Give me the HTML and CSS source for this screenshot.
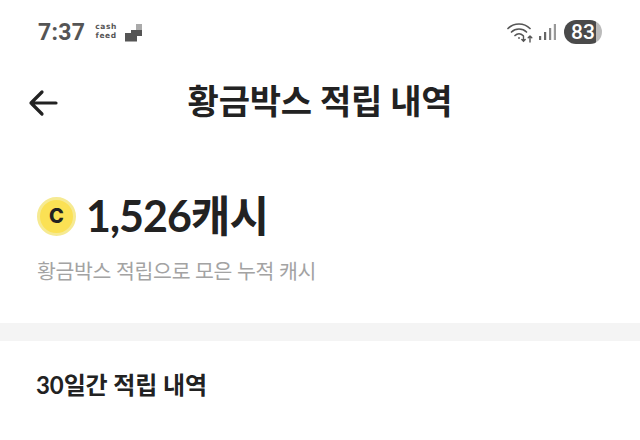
FILE: index.html
```html
<!DOCTYPE html>
<html lang="ko">
<head>
<meta charset="utf-8">
<title>황금박스 적립 내역</title>
<link rel="stylesheet" href="styles.css">
</head>
<body>
<div class="page">
  <div class="status">
    <div class="status-left">
      <span class="time">7:37</span>
      <span class="brand"><span class="brand-line">cash</span><span class="brand-line">feed</span></span>
      <svg class="steps" width="18" height="18" viewBox="0 0 18 18"><rect x="11" y="0" width="6" height="6" fill="#aaa"/><rect x="6" y="6" width="11" height="6" fill="#555"/><rect x="0" y="12" width="12" height="5.500" fill="#555"/><rect x="0" y="9" width="6" height="3" fill="#555"/></svg>
    </div>
    <div class="status-right">
      <svg class="wifi" width="28" height="22" viewBox="0 0 28 22" fill="none" stroke="#555" stroke-width="1.7" stroke-linecap="round"><path d="M1 7.500C7 1.500 17 1.500 23 7.500"/><path d="M4.500 11C8.500 7 15.500 7 19.500 11"/><path d="M8 14.500c2.300-2.200 5.700-2.200 8 0"/><circle cx="12" cy="17" r=".9" fill="#555" stroke="none"/><path d="M16.500 15v5M14.800 18.500l1.700 1.700 1.700-1.700M23 21v-6M21.200 16.800l1.800-1.800 1.800 1.800" stroke-width="1.400"/></svg>
      <svg class="signal" width="17" height="18" viewBox="0 0 17 18"><rect x="0" y="13" width="2.200" height="4" fill="#666"/><rect x="5" y="9" width="2.200" height="8" fill="#666"/><rect x="10" y="5" width="2.200" height="12" fill="#888"/><rect x="14.800" y="1" width="2.200" height="16" fill="#999"/></svg>
      <span class="battery">83</span>
    </div>
  </div>
  <header class="appbar">
    <svg class="back" width="32" height="30" viewBox="0 0 32 30" fill="none" stroke="#222" stroke-width="3.200" stroke-linecap="round" stroke-linejoin="round"><path d="M29 15H4M15 4 4 15l11 11"/></svg>
    <h1 class="title">황금박스 적립 내역</h1>
  </header>
  <section class="summary">
    <div class="amount-row">
      <span class="coin">C</span>
      <span class="amount">1,526캐시</span>
    </div>
    <p class="caption">황금박스 적립으로 모은 누적 캐시</p>
  </section>
  <div class="divider"></div>
  <h2 class="section-title">30일간 적립 내역</h2>
</div>
</body>
</html>
```
FILE: styles.css
```css
* { box-sizing: border-box; }
html, body { margin: 0; padding: 0; background: #fff; }
.page {
  width: 640px;
  height: 440px;
  overflow: hidden;
  font-family: Lato, "Noto Sans CJK KR", sans-serif;
  color: #222;
}
.status {
  height: 64px;
  padding: 0 38px;
  display: flex;
  justify-content: space-between;
  align-items: center;
}
.status-left, .status-right { display: flex; align-items: center; }
.time {
  font-family: Roboto, sans-serif;
  font-size: 23px;
  font-weight: 700;
  color: #555;
  letter-spacing: 0.3px;
}
.brand {
  display: flex;
  flex-direction: column;
  align-items: center;
  margin-left: 10px;
  font-family: "DejaVu Sans", sans-serif;
  font-size: 7.500px;
  font-weight: 700;
  letter-spacing: 0.6px;
  color: #555;
}
.brand-line { line-height: 8.800px; }
.steps { margin-left: 8px; margin-top: 1px; }
.wifi { margin-right: 4px; }
.signal { margin-right: 8px; }
.battery {
  width: 38px;
  height: 24px;
  border-radius: 12px;
  background: linear-gradient(90deg, #4a4a4a 0 84%, #bbb 84%);
  color: #fff;
  font-family: Roboto, sans-serif;
  font-size: 21px;
  font-weight: 500;
  line-height: 24px;
  text-align: center;
}
.appbar {
  height: 76px;
  display: flex;
  align-items: center;
  justify-content: center;
  position: relative;
}
.back { position: absolute; left: 27px; top: 24px; }
.title {
  margin: 0 0 2px;
  font-size: 34px;
  font-weight: 700;
  letter-spacing: -0.2px;
  line-height: 72px;
}
.summary { padding: 48px 37px 0; height: 183px; }
.amount-row { display: flex; align-items: center; height: 56px; }
.coin {
  width: 39px;
  height: 39px;
  border-radius: 50%;
  background: #fbe154;
  border: 3px solid #f6ea92;
  display: flex;
  align-items: center;
  justify-content: center;
  font-family: Inter, sans-serif;
  font-size: 20px;
  font-weight: 800;
  color: #222;
}
.amount {
  margin-left: 10px;
  font-size: 43px;
  font-weight: 700;
  letter-spacing: -1px;
  line-height: 56px;
}
.caption {
  margin: 12px 0 0;
  font-size: 20.500px;
  line-height: 30px;
  color: #a3a3a3;
  letter-spacing: -0.330px;
}
.divider { height: 18px; background: #f4f4f4; }
.section-title {
  margin: 26px 0 0 36px;
  font-size: 24px;
  font-weight: 700;
  line-height: 36px;
  letter-spacing: -0.100px;
}
```
